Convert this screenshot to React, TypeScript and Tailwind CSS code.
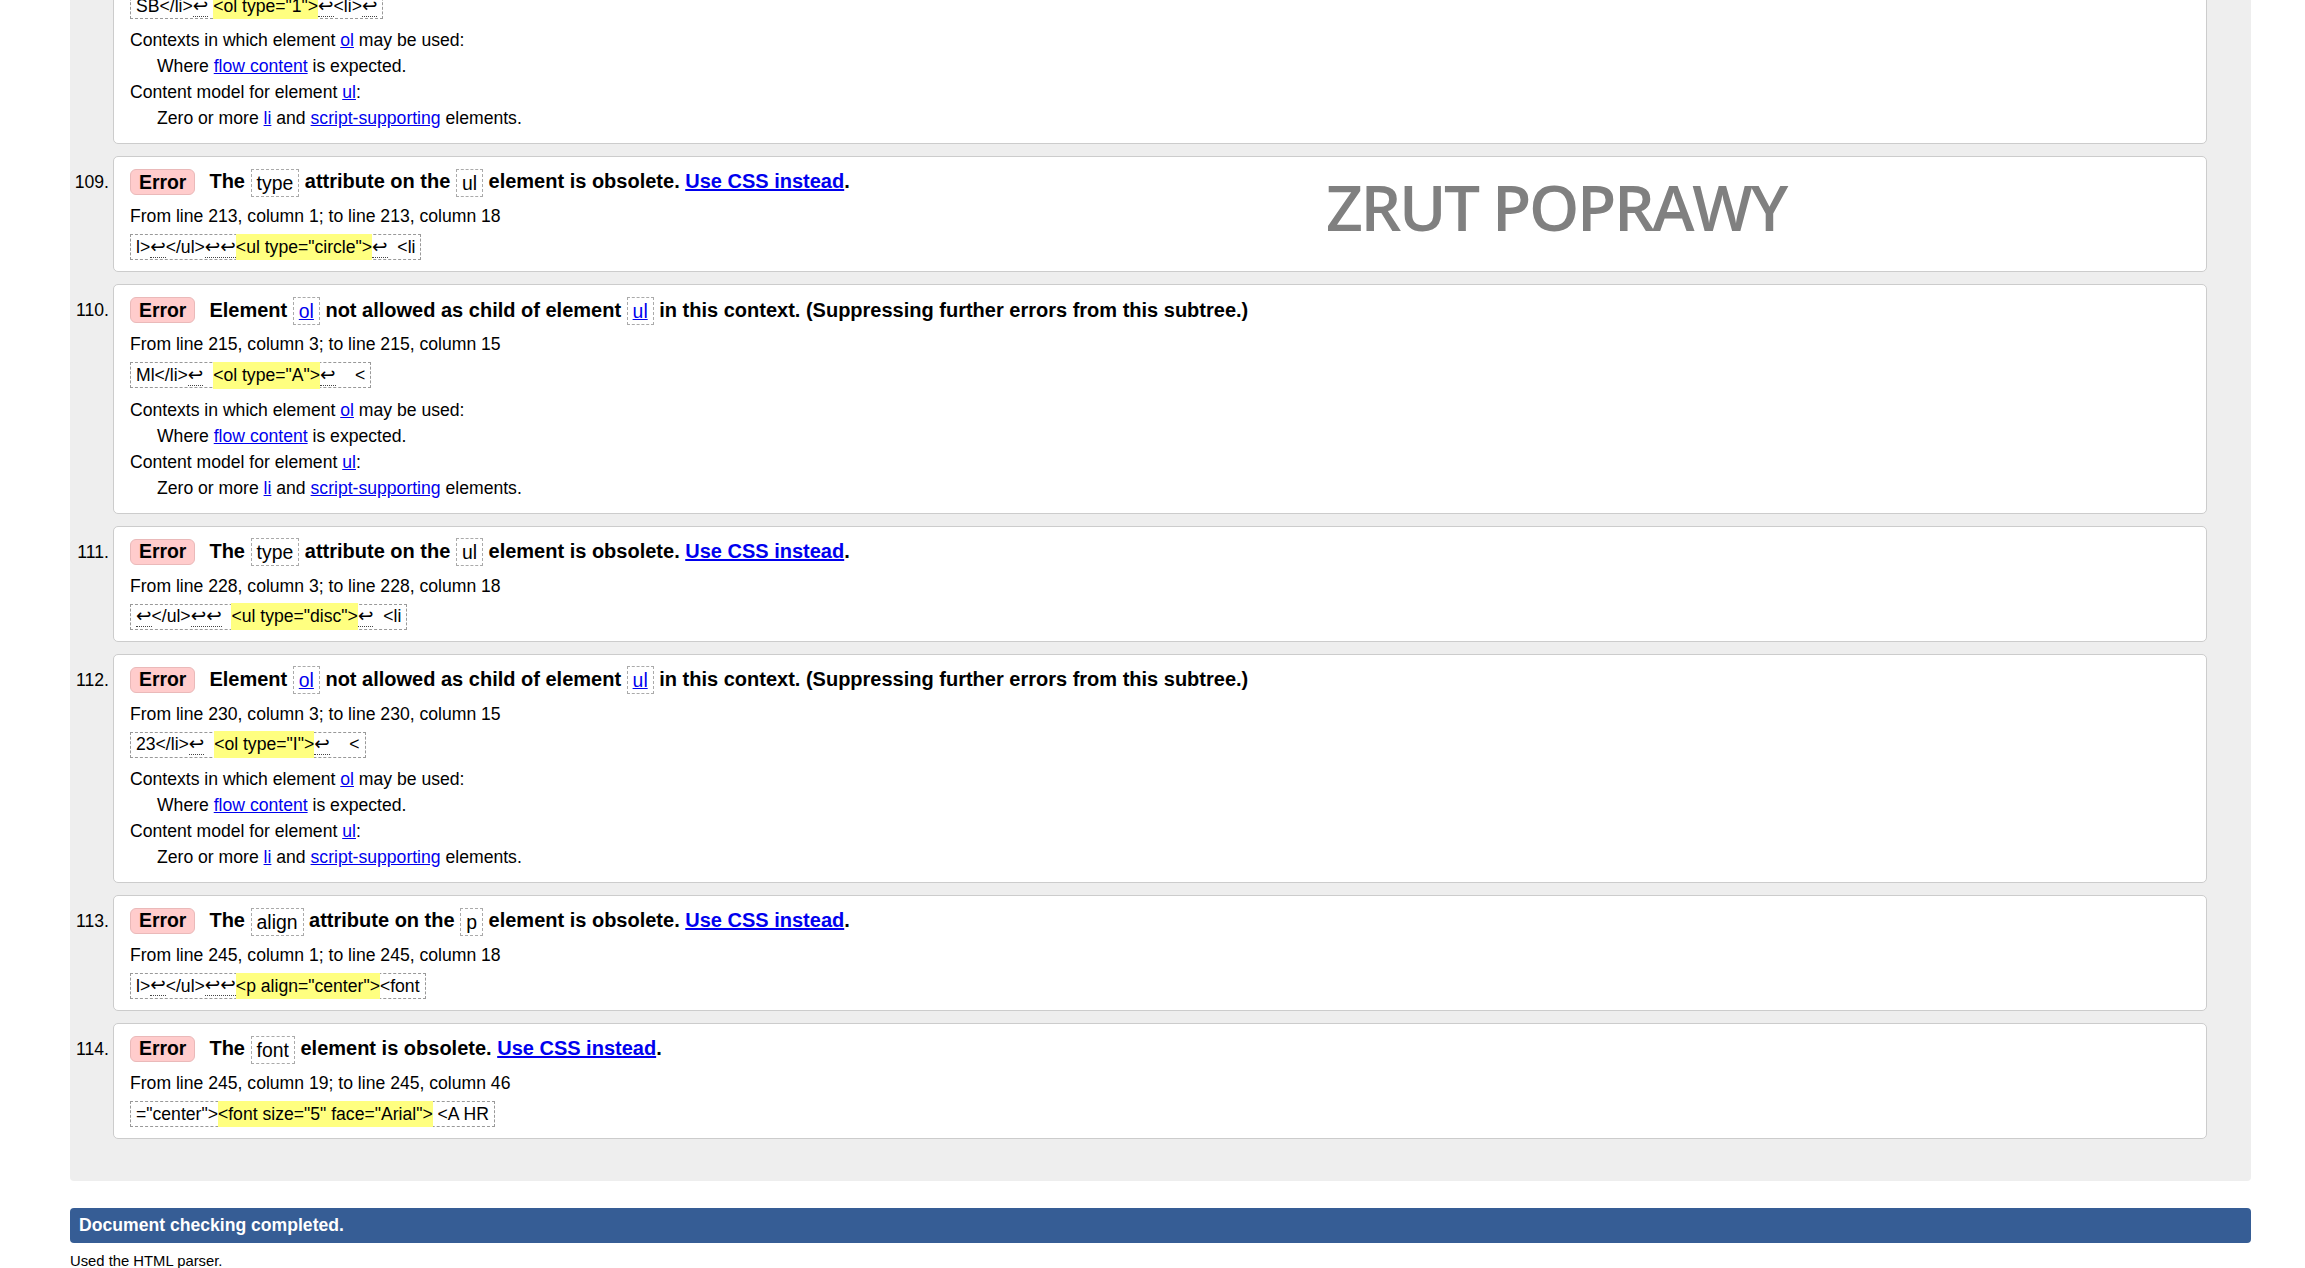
import type { ReactNode } from "react";

type Part = string | { lf: number } | { hl: string };

type Issue = {
  num: number;
  title: ReactNode;
  from: string;
  extract: Part[];
  contexts?: boolean;
  stamp?: boolean;
};

function A({ children, bold }: { children: ReactNode; bold?: boolean }) {
  return (
    <a href="#" className={`text-[#0000ee] underline ${bold ? "font-bold" : ""}`}>
      {children}
    </a>
  );
}

function Code({ children, link }: { children: ReactNode; link?: boolean }) {
  return (
    <span className="inline-block h-[28px] border border-dashed border-[#aaa] px-[5px] align-middle text-[19.4px] font-normal leading-[26px]">
      {link ? <A>{children}</A> : children}
    </span>
  );
}

function Lf({ count }: { count: number }) {
  return (
    <span className="border-b border-dotted border-[#444] font-['DejaVu_Sans',sans-serif] text-[18.5px] leading-[20px]">
      {"↩".repeat(count)}
    </span>
  );
}

function Extract({ parts }: { parts: Part[] }) {
  return (
    <div className="mt-[5px] inline-flex h-[26px] items-center whitespace-pre border border-dashed border-[#999] px-[5px]">
      {parts.map((p, i) => {
        if (typeof p === "string") return <span key={i}>{p}</span>;
        if ("lf" in p) return <Lf key={i} count={p.lf} />;
        return (
          <span key={i} className="bg-[#ffff80]">
            {p.hl}
          </span>
        );
      })}
    </div>
  );
}

const obsoleteAttr = (attr: string, el: string) => (
  <>
    The <Code>{attr}</Code> attribute on the <Code>{el}</Code> element is obsolete.{" "}
    <A bold>Use CSS instead</A>.
  </>
);

const notAllowed = (
  <>
    Element <Code link>ol</Code> not allowed as child of element <Code link>ul</Code> in this
    context. (Suppressing further errors from this subtree.)
  </>
);

const ISSUES: Issue[] = [
  {
    num: 108,
    title: notAllowed,
    from: "From line 204, column 3; to line 204, column 15",
    extract: ["SB</li>", { lf: 1 }, " ", { hl: '<ol type="1">' }, { lf: 1 }, "<li>", { lf: 1 }],
    contexts: true,
  },
  {
    num: 109,
    title: obsoleteAttr("type", "ul"),
    from: "From line 213, column 1; to line 213, column 18",
    extract: ["l>", { lf: 1 }, "</ul>", { lf: 2 }, { hl: '<ul type="circle">' }, { lf: 1 }, "  <li"],
    stamp: true,
  },
  {
    num: 110,
    title: notAllowed,
    from: "From line 215, column 3; to line 215, column 15",
    extract: ["Ml</li>", { lf: 1 }, "  ", { hl: '<ol type="A">' }, { lf: 1 }, "    <"],
    contexts: true,
  },
  {
    num: 111,
    title: obsoleteAttr("type", "ul"),
    from: "From line 228, column 3; to line 228, column 18",
    extract: [{ lf: 1 }, "</ul>", { lf: 2 }, "  ", { hl: '<ul type="disc">' }, { lf: 1 }, "  <li"],
  },
  {
    num: 112,
    title: notAllowed,
    from: "From line 230, column 3; to line 230, column 15",
    extract: ["23</li>", { lf: 1 }, "  ", { hl: '<ol type="I">' }, { lf: 1 }, "    <"],
    contexts: true,
  },
  {
    num: 113,
    title: obsoleteAttr("align", "p"),
    from: "From line 245, column 1; to line 245, column 18",
    extract: ["l>", { lf: 1 }, "</ul>", { lf: 2 }, { hl: '<p align="center">' }, "<font"],
  },
  {
    num: 114,
    title: (
      <>
        The <Code>font</Code> element is obsolete. <A bold>Use CSS instead</A>.
      </>
    ),
    from: "From line 245, column 19; to line 245, column 46",
    extract: ['="center">', { hl: '<font size="5" face="Arial">' }, " <A HR"],
  },
];

function IssueCard({ issue }: { issue: Issue }) {
  return (
    <li className="flex">
      <div className="w-[43px] shrink-0 pr-[4px] pt-[12px] text-right leading-[28px]">{issue.num}.</div>
      <div className="relative flex-1 rounded-[5px] border border-[#ccc] bg-white px-[16px] pb-[11px] pt-[11px]">
        <div className="flex h-[28px] items-center">
          <span className="mr-[14px] inline-flex h-[26px] items-center rounded-[6px] border border-[#eab9b9] bg-[#ffcccc] px-[8px] text-[19.4px] font-bold">
            Error
          </span>
          <span className="text-[20px] font-bold leading-[28px]">{issue.title}</span>
        </div>
        <div className="mt-[7px] leading-[26px]">{issue.from}</div>
        <Extract parts={issue.extract} />
        {issue.contexts && (
          <div className="mb-[1px] mt-[8px] leading-[26px]">
            <div>
              Contexts in which element <A>ol</A> may be used:
            </div>
            <div className="pl-[27px]">
              Where <A>flow content</A> is expected.
            </div>
            <div>
              Content model for element <A>ul</A>:
            </div>
            <div className="pl-[27px]">
              Zero or more <A>li</A> and <A>script-supporting</A> elements.
            </div>
          </div>
        )}
        {issue.stamp && (
          <div className="pointer-events-none absolute left-[1212px] top-[18px] font-['Open_Sans',sans-serif] text-[64px] font-semibold leading-none tracking-[-2.4px] text-[#808080]">
            ZRUT POPRAWY
          </div>
        )}
      </div>
    </li>
  );
}

export default function App() {
  return (
    <div className="min-h-screen overflow-hidden bg-white font-['Liberation_Sans',Arial,sans-serif] text-[17.6px] text-black">
      <div className="ml-[70px] mr-[54px] mt-[-105px]">
        <ol className="flex flex-col gap-[12px] rounded-[4px] bg-[#eeeeee] pb-[42px] pr-[44px] pt-[20px]">
          {ISSUES.map((issue) => (
            <IssueCard key={issue.num} issue={issue} />
          ))}
        </ol>
        <div className="mt-[27px] h-[35px] rounded-[4px] bg-[#365d95] px-[9px] font-bold leading-[35px] text-white">
          Document checking completed.
        </div>
        <p className="mt-[9px] text-[14.8px] leading-[18px]">Used the HTML parser.</p>
      </div>
    </div>
  );
}
